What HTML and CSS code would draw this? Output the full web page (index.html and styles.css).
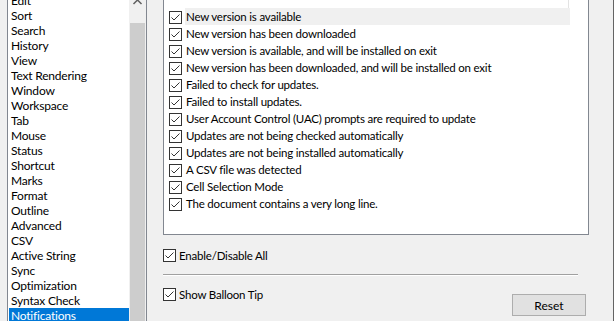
FILE: index.html
```html
<!DOCTYPE html>
<html lang="en">
<head>
  <meta charset="UTF-8">
  <title>Options - Notifications</title>
  <link rel="stylesheet" href="styles.css">
</head>
<body>
<svg class="defs" width="0" height="0">
  <symbol id="tick" viewBox="0 0 13 13">
    <rect x="0.5" y="0.5" width="12" height="12" fill="#fff" stroke="#333"/>
    <polyline points="2.5,6.5 5,9 10.5,3.5" fill="none" stroke="#333" stroke-width="1"/>
  </symbol>
</svg>
<div class="dialog">
  <div class="nav">
    <ul class="nav-items">
      <li>Edit</li>
      <li>Sort</li>
      <li>Search</li>
      <li>History</li>
      <li>View</li>
      <li>Text Rendering</li>
      <li>Window</li>
      <li>Workspace</li>
      <li>Tab</li>
      <li>Mouse</li>
      <li>Status</li>
      <li>Shortcut</li>
      <li>Marks</li>
      <li>Format</li>
      <li>Outline</li>
      <li>Advanced</li>
      <li>CSV</li>
      <li>Active String</li>
      <li>Sync</li>
      <li>Optimization</li>
      <li>Syntax Check</li>
      <li class="selected">Notifications</li>
    </ul>
    <div class="vscroll">
      <svg class="arrow-up" width="17" height="17" viewBox="0 0 17 17">
        <polyline points="4.5,10 8.5,6 12.5,10" fill="none" stroke="#606060" stroke-width="1.5"/>
      </svg>
      <div class="thumb"></div>
    </div>
  </div>

  <div class="panel">
    <div class="notify-list">
      <div class="list-top"></div>
      <div class="item current"><svg class="cb"><use href="#tick"/></svg><span>New version is available</span></div>
      <div class="item"><svg class="cb"><use href="#tick"/></svg><span>New version has been downloaded</span></div>
      <div class="item"><svg class="cb"><use href="#tick"/></svg><span>New version is available, and will be installed on exit</span></div>
      <div class="item"><svg class="cb"><use href="#tick"/></svg><span>New version has been downloaded, and will be installed on exit</span></div>
      <div class="item"><svg class="cb"><use href="#tick"/></svg><span>Failed to check for updates.</span></div>
      <div class="item"><svg class="cb"><use href="#tick"/></svg><span>Failed to install updates.</span></div>
      <div class="item"><svg class="cb"><use href="#tick"/></svg><span>User Account Control (UAC) prompts are required to update</span></div>
      <div class="item"><svg class="cb"><use href="#tick"/></svg><span>Updates are not being checked automatically</span></div>
      <div class="item"><svg class="cb"><use href="#tick"/></svg><span>Updates are not being installed automatically</span></div>
      <div class="item"><svg class="cb"><use href="#tick"/></svg><span>A CSV file was detected</span></div>
      <div class="item"><svg class="cb"><use href="#tick"/></svg><span>Cell Selection Mode</span></div>
      <div class="item"><svg class="cb"><use href="#tick"/></svg><span>The document contains a very long line.</span></div>
    </div>

    <div class="option enable-all"><svg class="cb"><use href="#tick"/></svg><span>Enable/Disable All</span></div>
    <div class="sep"></div>
    <div class="footer">
      <div class="option"><svg class="cb"><use href="#tick"/></svg><span>Show Balloon Tip</span></div>
      <button class="reset">Reset</button>
    </div>
  </div>
  <div class="edge"></div>
</div>
</body>
</html>
```

FILE: styles.css
```css
html, body {
  margin: 0;
  height: 100%;
}
body {
  background-color: #f0f0f0;
  font-family: Lato, "Noto Sans", sans-serif;
  font-size: 11.5px;
  letter-spacing: -0.2px;
  color: #000;
  overflow: hidden;
}
.defs {
  position: absolute;
}

.dialog {
  display: flex;
  height: 321px;
  overflow: hidden;
}

/* left category list */
.nav {
  display: flex;
  width: 140px;
  margin-left: 7px;
  background: #fff;
  border-left: 1px solid #828790;
  border-right: 1px solid #828790;
  box-sizing: border-box;
  overflow: hidden;
}
.nav-items {
  list-style: none;
  margin: -7px 0 0 0;
  padding: 0;
  width: 121px;
  font-size: 12px;
}
.nav-items li {
  height: 15px;
  line-height: 15px;
  margin-left: 1px;
  padding-left: 2px;
  white-space: nowrap;
}
.nav-items li.selected {
  background-color: #0078d7;
  color: #fff;
}
.vscroll {
  display: flex;
  flex-direction: column;
  width: 17px;
  background-color: #f0f0f0;
}
.arrow-up {
  display: block;
  margin-top: -6px;
  flex: none;
}
.thumb {
  flex: 1;
  margin: 12px 1px 0 1px;
  background-color: #cdcdcd;
}

/* right panel */
.panel {
  flex: 1;
  padding-left: 16px;
}
.notify-list {
  width: 426px;
  margin-top: -10px;
  padding-bottom: 22px;
  background: #fff;
  border: 1px solid #828790;
  box-sizing: border-box;
}
.list-top {
  height: 17px;
  width: 385px;
  margin-left: 20px;
  border-right: 1px solid #e3e3e3;
  box-sizing: border-box;
}
.item {
  display: flex;
  align-items: flex-start;
  height: 17px;
  padding-left: 5px;
}
.cb {
  flex: none;
  width: 13px;
  height: 13px;
}
.item .cb {
  margin-top: 3px;
}
.item span {
  width: 385px;
  margin-left: 3px;
  padding-left: 1px;
  line-height: 17px;
  white-space: nowrap;
  box-sizing: border-box;
}
.item.current span {
  background-color: #f0f0f0;
}

.option {
  display: flex;
  align-items: center;
  height: 13px;
}
.option span {
  margin-left: 3px;
  line-height: 13px;
}
.enable-all {
  margin-top: 14px;
}
.sep {
  width: 415px;
  height: 1px;
  margin-top: 12px;
  background-color: #a0a0a0;
  border-bottom: 1px solid #fff;
}
.footer {
  display: flex;
  justify-content: space-between;
  align-items: flex-start;
  width: 423px;
  margin-top: 12px;
}
.reset {
  width: 74px;
  height: 22px;
  margin-top: 6px;
  padding: 0;
  background-color: #e1e1e1;
  border: 1px solid #adadad;
  font-family: inherit;
  font-size: 12px;
  letter-spacing: 0;
  color: #000;
}

.edge {
  width: 1px;
  background-color: #646464;
}
```
